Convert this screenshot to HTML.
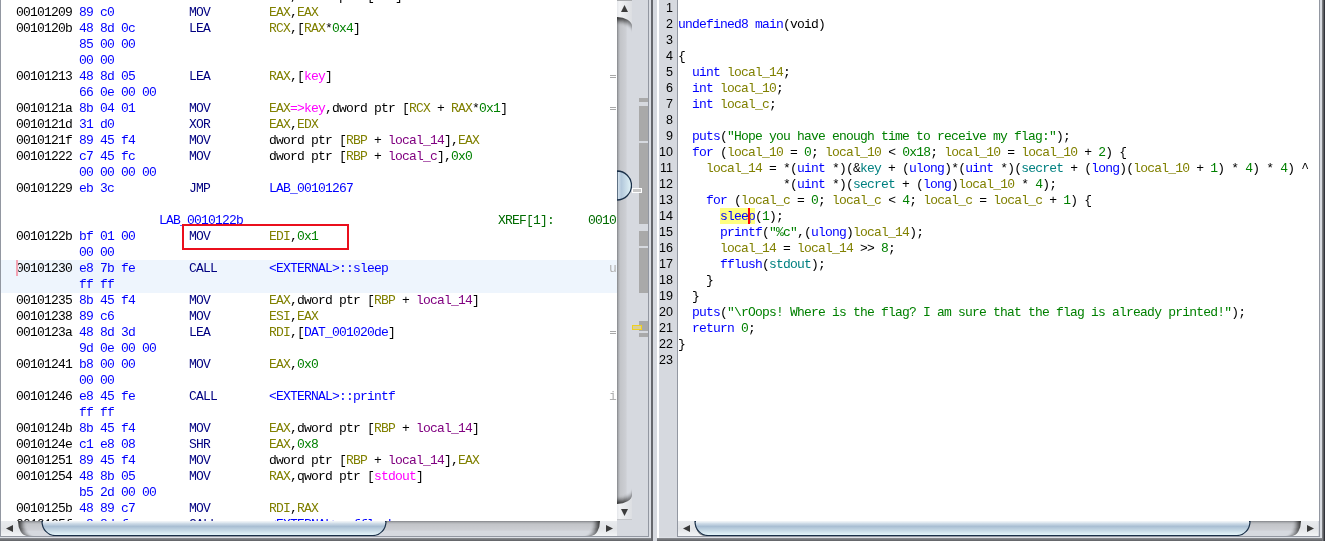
<!DOCTYPE html>
<html><head><meta charset="utf-8">
<style>
html,body{margin:0;padding:0;width:1325px;height:541px;overflow:hidden;background:#d6d9df;position:relative}
.p{position:absolute}
.t{position:absolute;white-space:pre;will-change:transform;font-family:"Liberation Mono",monospace;font-size:13px;letter-spacing:-0.8px;line-height:16px;color:#000}
.b{color:#0000ff}.m{color:#000080}.r{color:#808000}.n{color:#008000}.g{color:#ff00ff}.l{color:#800080}.k{color:#0000ff}.x{color:#006b00}.q{color:#b0b0b0}
.kw{color:#0000ff}.fn{color:#0000ff}.vr{color:#808000}.gl{color:#008080}.cn{color:#008000}.st{color:#008000}
.fnh{color:#0000ff}
.ln{position:absolute;will-change:transform;left:656px;width:17px;text-align:right;font-family:"Liberation Sans",sans-serif;font-size:12.5px;line-height:16px;color:#000}
</style></head><body>
<!-- LEFT FRAME -->
<div class="p" style="left:0;top:0;width:1px;height:537px;background:#9297a1"></div>
<div class="p" style="left:1px;top:0;width:616px;height:521px;background:#fff;overflow:hidden">
  <div class="p" style="left:0;top:260px;width:616px;height:33px;background:#eef5fd"></div>
</div>
<div class="p" style="left:1px;top:0;width:616px;height:521px;overflow:hidden">
  <div style="position:absolute;left:-1px;top:0;width:617px;height:521px">
<div class="t" style="left:188.5px;top:-11px"><span class="m">MOV</span></div>
<div class="t" style="left:268.5px;top:-11px"><span class="r">EAX</span>,dword ptr [<span class="r">RAX</span>]</div>
<div class="t" style="left:15.5px;top:5px">00101209</div>
<div class="t" style="left:78.5px;top:5px"><span class="b">89 c0</span></div>
<div class="t" style="left:188.5px;top:5px"><span class="m">MOV</span></div>
<div class="t" style="left:268.5px;top:5px"><span class="r">EAX</span>,<span class="r">EAX</span></div>
<div class="t" style="left:15.5px;top:21px">0010120b</div>
<div class="t" style="left:78.5px;top:21px"><span class="b">48 8d 0c</span></div>
<div class="t" style="left:188.5px;top:21px"><span class="m">LEA</span></div>
<div class="t" style="left:268.5px;top:21px"><span class="r">RCX</span>,[<span class="r">RAX</span>*<span class="n">0x4</span>]</div>
<div class="t" style="left:78.5px;top:37px"><span class="b">85 00 00</span></div>
<div class="t" style="left:78.5px;top:53px"><span class="b">00 00</span></div>
<div class="t" style="left:15.5px;top:69px">00101213</div>
<div class="t" style="left:78.5px;top:69px"><span class="b">48 8d 05</span></div>
<div class="t" style="left:188.5px;top:69px"><span class="m">LEA</span></div>
<div class="t" style="left:268.5px;top:69px"><span class="r">RAX</span>,[<span class="g">key</span>]</div>
<div class="t" style="left:78.5px;top:85px"><span class="b">66 0e 00 00</span></div>
<div class="t" style="left:15.5px;top:101px">0010121a</div>
<div class="t" style="left:78.5px;top:101px"><span class="b">8b 04 01</span></div>
<div class="t" style="left:188.5px;top:101px"><span class="m">MOV</span></div>
<div class="t" style="left:268.5px;top:101px"><span class="r">EAX</span><span class="g">=&gt;key</span>,dword ptr [<span class="r">RCX</span> + <span class="r">RAX</span>*<span class="n">0x1</span>]</div>
<div class="t" style="left:15.5px;top:117px">0010121d</div>
<div class="t" style="left:78.5px;top:117px"><span class="b">31 d0</span></div>
<div class="t" style="left:188.5px;top:117px"><span class="m">XOR</span></div>
<div class="t" style="left:268.5px;top:117px"><span class="r">EAX</span>,<span class="r">EDX</span></div>
<div class="t" style="left:15.5px;top:133px">0010121f</div>
<div class="t" style="left:78.5px;top:133px"><span class="b">89 45 f4</span></div>
<div class="t" style="left:188.5px;top:133px"><span class="m">MOV</span></div>
<div class="t" style="left:268.5px;top:133px">dword ptr [<span class="r">RBP</span> + <span class="l">local_14</span>],<span class="r">EAX</span></div>
<div class="t" style="left:15.5px;top:149px">00101222</div>
<div class="t" style="left:78.5px;top:149px"><span class="b">c7 45 fc</span></div>
<div class="t" style="left:188.5px;top:149px"><span class="m">MOV</span></div>
<div class="t" style="left:268.5px;top:149px">dword ptr [<span class="r">RBP</span> + <span class="l">local_c</span>],<span class="n">0x0</span></div>
<div class="t" style="left:78.5px;top:165px"><span class="b">00 00 00 00</span></div>
<div class="t" style="left:15.5px;top:181px">00101229</div>
<div class="t" style="left:78.5px;top:181px"><span class="b">eb 3c</span></div>
<div class="t" style="left:188.5px;top:181px"><span class="m">JMP</span></div>
<div class="t" style="left:268.5px;top:181px"><span class="k">LAB_00101267</span></div>
<div class="t" style="left:158.5px;top:213px"><span class="k">LAB_0010122b</span></div>
<div class="t" style="left:497.5px;top:213px"><span class="x">XREF[1]:</span></div>
<div class="t" style="left:587.5px;top:213px"><span class="x">00101267(j)</span></div>
<div class="t" style="left:15.5px;top:229px">0010122b</div>
<div class="t" style="left:78.5px;top:229px"><span class="b">bf 01 00</span></div>
<div class="t" style="left:188.5px;top:229px"><span class="m">MOV</span></div>
<div class="t" style="left:268.5px;top:229px"><span class="r">EDI</span>,<span class="n">0x1</span></div>
<div class="t" style="left:78.5px;top:245px"><span class="b">00 00</span></div>
<div class="t" style="left:15.5px;top:261px">00101230</div>
<div class="t" style="left:78.5px;top:261px"><span class="b">e8 7b fe</span></div>
<div class="t" style="left:188.5px;top:261px"><span class="m">CALL</span></div>
<div class="t" style="left:268.5px;top:261px"><span class="k">&lt;EXTERNAL&gt;::sleep</span></div>
<div class="t" style="left:78.5px;top:277px"><span class="b">ff ff</span></div>
<div class="t" style="left:15.5px;top:293px">00101235</div>
<div class="t" style="left:78.5px;top:293px"><span class="b">8b 45 f4</span></div>
<div class="t" style="left:188.5px;top:293px"><span class="m">MOV</span></div>
<div class="t" style="left:268.5px;top:293px"><span class="r">EAX</span>,dword ptr [<span class="r">RBP</span> + <span class="l">local_14</span>]</div>
<div class="t" style="left:15.5px;top:309px">00101238</div>
<div class="t" style="left:78.5px;top:309px"><span class="b">89 c6</span></div>
<div class="t" style="left:188.5px;top:309px"><span class="m">MOV</span></div>
<div class="t" style="left:268.5px;top:309px"><span class="r">ESI</span>,<span class="r">EAX</span></div>
<div class="t" style="left:15.5px;top:325px">0010123a</div>
<div class="t" style="left:78.5px;top:325px"><span class="b">48 8d 3d</span></div>
<div class="t" style="left:188.5px;top:325px"><span class="m">LEA</span></div>
<div class="t" style="left:268.5px;top:325px"><span class="r">RDI</span>,[<span class="k">DAT_001020de</span>]</div>
<div class="t" style="left:78.5px;top:341px"><span class="b">9d 0e 00 00</span></div>
<div class="t" style="left:15.5px;top:357px">00101241</div>
<div class="t" style="left:78.5px;top:357px"><span class="b">b8 00 00</span></div>
<div class="t" style="left:188.5px;top:357px"><span class="m">MOV</span></div>
<div class="t" style="left:268.5px;top:357px"><span class="r">EAX</span>,<span class="n">0x0</span></div>
<div class="t" style="left:78.5px;top:373px"><span class="b">00 00</span></div>
<div class="t" style="left:15.5px;top:389px">00101246</div>
<div class="t" style="left:78.5px;top:389px"><span class="b">e8 45 fe</span></div>
<div class="t" style="left:188.5px;top:389px"><span class="m">CALL</span></div>
<div class="t" style="left:268.5px;top:389px"><span class="k">&lt;EXTERNAL&gt;::printf</span></div>
<div class="t" style="left:78.5px;top:405px"><span class="b">ff ff</span></div>
<div class="t" style="left:15.5px;top:421px">0010124b</div>
<div class="t" style="left:78.5px;top:421px"><span class="b">8b 45 f4</span></div>
<div class="t" style="left:188.5px;top:421px"><span class="m">MOV</span></div>
<div class="t" style="left:268.5px;top:421px"><span class="r">EAX</span>,dword ptr [<span class="r">RBP</span> + <span class="l">local_14</span>]</div>
<div class="t" style="left:15.5px;top:437px">0010124e</div>
<div class="t" style="left:78.5px;top:437px"><span class="b">c1 e8 08</span></div>
<div class="t" style="left:188.5px;top:437px"><span class="m">SHR</span></div>
<div class="t" style="left:268.5px;top:437px"><span class="r">EAX</span>,<span class="n">0x8</span></div>
<div class="t" style="left:15.5px;top:453px">00101251</div>
<div class="t" style="left:78.5px;top:453px"><span class="b">89 45 f4</span></div>
<div class="t" style="left:188.5px;top:453px"><span class="m">MOV</span></div>
<div class="t" style="left:268.5px;top:453px">dword ptr [<span class="r">RBP</span> + <span class="l">local_14</span>],<span class="r">EAX</span></div>
<div class="t" style="left:15.5px;top:469px">00101254</div>
<div class="t" style="left:78.5px;top:469px"><span class="b">48 8b 05</span></div>
<div class="t" style="left:188.5px;top:469px"><span class="m">MOV</span></div>
<div class="t" style="left:268.5px;top:469px"><span class="r">RAX</span>,qword ptr [<span class="g">stdout</span>]</div>
<div class="t" style="left:78.5px;top:485px"><span class="b">b5 2d 00 00</span></div>
<div class="t" style="left:15.5px;top:501px">0010125b</div>
<div class="t" style="left:78.5px;top:501px"><span class="b">48 89 c7</span></div>
<div class="t" style="left:188.5px;top:501px"><span class="m">MOV</span></div>
<div class="t" style="left:268.5px;top:501px"><span class="r">RDI</span>,<span class="r">RAX</span></div>
<div class="t" style="left:15.5px;top:517px">0010125f</div>
<div class="t" style="left:78.5px;top:517px"><span class="b">e8 8d fe</span></div>
<div class="t" style="left:188.5px;top:517px"><span class="m">CALL</span></div>
<div class="t" style="left:268.5px;top:517px"><span class="k">&lt;EXTERNAL&gt;::fflush</span></div>
<div style="position:absolute;left:610px;top:75px;width:6px;height:1px;background:#a8a8a8"></div>
<div style="position:absolute;left:610px;top:77px;width:6px;height:1px;background:#a8a8a8"></div>
<div style="position:absolute;left:610px;top:107px;width:6px;height:1px;background:#a8a8a8"></div>
<div style="position:absolute;left:610px;top:109px;width:6px;height:1px;background:#a8a8a8"></div>
<div style="position:absolute;left:610px;top:331px;width:6px;height:1px;background:#a8a8a8"></div>
<div style="position:absolute;left:610px;top:333px;width:6px;height:1px;background:#a8a8a8"></div>
<div class="t q" style="left:608.5px;top:261px">u</div>
<div class="t q" style="left:608.5px;top:389px">i</div>
  <div class="p" style="left:16px;top:260px;width:2px;height:16px;background:#f3a3b3"></div>
  <div class="p" style="left:182px;top:224px;width:163px;height:22px;border:2px solid #ea0f1c"></div>
  </div>
</div>
<!-- vertical scrollbar left -->
<svg class="p" style="left:617px;top:0" width="15" height="520" viewBox="0 0 15 520">
  <defs>
    <linearGradient id="vtrack" x1="0" y1="0" x2="1" y2="0">
      <stop offset="0" stop-color="#7e8084"/><stop offset="0.07" stop-color="#a3a5a9"/><stop offset="0.2" stop-color="#c2c4c8"/><stop offset="0.6" stop-color="#cdcfd4"/><stop offset="0.68" stop-color="#d6d9df"/><stop offset="1" stop-color="#d6d9df"/>
    </linearGradient>
    <linearGradient id="vbtn" x1="0" y1="0" x2="1" y2="0">
      <stop offset="0" stop-color="#e4e6ea"/><stop offset="0.15" stop-color="#f2f3f5"/><stop offset="0.6" stop-color="#e6e8eb"/><stop offset="1" stop-color="#dcdee2"/>
    </linearGradient>
    <linearGradient id="vshT" x1="0" y1="0" x2="0" y2="1">
      <stop offset="0" stop-color="#303030" stop-opacity="0.9"/><stop offset="1" stop-color="#303030" stop-opacity="0"/>
    </linearGradient>
    <linearGradient id="vshB" x1="0" y1="1" x2="0" y2="0">
      <stop offset="0" stop-color="#303030" stop-opacity="0.9"/><stop offset="1" stop-color="#303030" stop-opacity="0"/>
    </linearGradient>
    <linearGradient id="vthumb" x1="0" y1="0" x2="1" y2="0">
      <stop offset="0" stop-color="#eef4f8"/><stop offset="0.12" stop-color="#c9d9e6"/><stop offset="0.3" stop-color="#b3c8db"/><stop offset="1" stop-color="#e2f4f8"/>
    </linearGradient>
    <linearGradient id="vmg" x1="0" y1="0" x2="1" y2="0"><stop offset="0" stop-color="#fff"/><stop offset="0.5" stop-color="#fff" stop-opacity="0.85"/><stop offset="1" stop-color="#fff" stop-opacity="0.5"/></linearGradient>
    <mask id="vmask" maskUnits="userSpaceOnUse" x="0" y="0" width="15" height="520"><rect x="0" y="0" width="15" height="520" fill="url(#vmg)"/></mask>
  </defs>
  <rect x="0" y="0" width="15" height="520" fill="url(#vtrack)"/>
  <g mask="url(#vmask)">
  <path d="M0,0 H15 V27 A15,9 0 0 0 0,18 Z" fill="#202020" fill-opacity="0.35"/>
  <path d="M0,520 H15 V494 A15,9 0 0 1 0,503 Z" fill="#202020" fill-opacity="0.35"/>
  <path d="M0,0 H15 V28 A15,9 0 0 0 0,19 Z" fill="#202020" fill-opacity="0.3"/>
  <path d="M0,520 H15 V493 A15,9 0 0 1 0,502 Z" fill="#202020" fill-opacity="0.3"/>
  <path d="M0,0 H15 V29 A15,9 0 0 0 0,20 Z" fill="#202020" fill-opacity="0.25"/>
  <path d="M0,520 H15 V492 A15,9 0 0 1 0,501 Z" fill="#202020" fill-opacity="0.25"/>
  <path d="M0,0 H15 V30 A15,9 0 0 0 0,21 Z" fill="#202020" fill-opacity="0.2"/>
  <path d="M0,520 H15 V491 A15,9 0 0 1 0,500 Z" fill="#202020" fill-opacity="0.2"/>
  <path d="M0,0 H15 V31 A15,9 0 0 0 0,22 Z" fill="#202020" fill-opacity="0.15"/>
  <path d="M0,520 H15 V490 A15,9 0 0 1 0,499 Z" fill="#202020" fill-opacity="0.15"/>
  <path d="M0,0 H15 V32 A15,9 0 0 0 0,23 Z" fill="#202020" fill-opacity="0.1"/>
  <path d="M0,520 H15 V489 A15,9 0 0 1 0,498 Z" fill="#202020" fill-opacity="0.1"/>
  <path d="M0,0 H15 V33 A15,9 0 0 0 0,24 Z" fill="#202020" fill-opacity="0.06"/>
  <path d="M0,520 H15 V488 A15,9 0 0 1 0,497 Z" fill="#202020" fill-opacity="0.06"/>
  <path d="M0,0 H15 V34 A15,9 0 0 0 0,25 Z" fill="#202020" fill-opacity="0.03"/>
  <path d="M0,520 H15 V487 A15,9 0 0 1 0,496 Z" fill="#202020" fill-opacity="0.03"/>
  </g>
  <path d="M0,0 H15 V26 A15,9 0 0 0 0,17 Z" fill="url(#vbtn)"/>
  <rect x="0" y="0" width="15" height="1" fill="#a9abae"/>
  <path d="M4,12 L7.5,5 L11,12 Z" fill="#3c3c3c"/>
  <path d="M0,520 H15 V495 A15,9 0 0 1 0,504 Z" fill="url(#vbtn)"/>
  <rect x="0" y="519" width="15" height="1" fill="#c4c6ca"/>
  <path d="M4,509 L11,509 L7.5,516 Z" fill="#3c3c3c"/>
  <path d="M0,171 A14.5,14.5 0 0 1 0,200 Z" fill="url(#vthumb)" stroke="#1a3049" stroke-width="1.3"/>
</svg>
<!-- overview column -->
<div class="p" style="left:639px;top:98px;width:9px;height:4px;background:#a9a9a9"></div>
<div class="p" style="left:639px;top:106px;width:9px;height:35px;background:#a9a9a9"></div>
<div class="p" style="left:639px;top:143px;width:9px;height:81px;background:#a9a9a9"></div>
<div class="p" style="left:639px;top:231px;width:9px;height:15px;background:#a9a9a9"></div>
<div class="p" style="left:639px;top:248px;width:9px;height:45px;background:#a9a9a9"></div>
<div class="p" style="left:639px;top:321px;width:9px;height:10px;background:#a9a9a9"></div>
<div class="p" style="left:639px;top:333px;width:9px;height:4px;background:#a9a9a9"></div>
<div class="p" style="left:632px;top:188px;width:8px;height:3px;border:1px solid #ffffff;background:#c8c8c8"></div>
<div class="p" style="left:632px;top:325px;width:8px;height:3px;border:1px solid #f0d020;background:#d8cf9c"></div>
<div class="p" style="left:648px;top:0;width:1px;height:537px;background:#9297a1"></div>
<div class="p" style="left:649px;top:0;width:2px;height:538px;background:#d9dce2"></div>
<div class="p" style="left:651px;top:0;width:2px;height:541px;background:#66686d"></div>
<!-- h scrollbar left -->
<svg class="p" style="left:1px;top:521px" width="616" height="15" viewBox="0 0 616 15">
  <defs>
    <linearGradient id="hltr" x1="0" y1="0" x2="0" y2="1">
      <stop offset="0" stop-color="#7e8084"/><stop offset="0.07" stop-color="#a3a5a9"/><stop offset="0.2" stop-color="#c2c4c8"/><stop offset="0.6" stop-color="#cdcfd4"/><stop offset="0.68" stop-color="#d6d9df"/><stop offset="1" stop-color="#d6d9df"/>
    </linearGradient>
    <linearGradient id="hlbt" x1="0" y1="0" x2="0" y2="1">
      <stop offset="0" stop-color="#e9ebee"/><stop offset="0.5" stop-color="#e2e4e7"/><stop offset="1" stop-color="#f2f4f6"/>
    </linearGradient>
    <linearGradient id="hlshL" x1="0" y1="0" x2="1" y2="0">
      <stop offset="0" stop-color="#303030" stop-opacity="0.9"/><stop offset="1" stop-color="#303030" stop-opacity="0"/>
    </linearGradient>
    <linearGradient id="hlshR" x1="1" y1="0" x2="0" y2="0">
      <stop offset="0" stop-color="#303030" stop-opacity="0.9"/><stop offset="1" stop-color="#303030" stop-opacity="0"/>
    </linearGradient>
    <linearGradient id="hlth" x1="0" y1="0" x2="0" y2="1">
      <stop offset="0" stop-color="#f4f7fa"/><stop offset="0.12" stop-color="#d3dfea"/><stop offset="0.35" stop-color="#a9bed3"/><stop offset="1" stop-color="#e9f9fc"/>
    </linearGradient>
    <linearGradient id="hlmg" x1="0" y1="0" x2="0" y2="1"><stop offset="0" stop-color="#fff"/><stop offset="0.5" stop-color="#fff" stop-opacity="0.85"/><stop offset="1" stop-color="#fff" stop-opacity="0.5"/></linearGradient>
    <mask id="hlmk" maskUnits="userSpaceOnUse" x="0" y="0" width="616" height="15"><rect x="0" y="0" width="616" height="15" fill="url(#hlmg)"/></mask>
  </defs>
  <rect x="0" y="0" width="616" height="15" fill="url(#hltr)"/>
  <g mask="url(#hlmk)">
  <path d="M0,0 H18 A9,15 0 0 0 27,15 H0 Z" fill="#202020" fill-opacity="0.35"/>
  <path d="M616,0 H598 A9,15 0 0 1 589,15 H616 Z" fill="#202020" fill-opacity="0.35"/>
  <path d="M0,0 H19 A9,15 0 0 0 28,15 H0 Z" fill="#202020" fill-opacity="0.3"/>
  <path d="M616,0 H597 A9,15 0 0 1 588,15 H616 Z" fill="#202020" fill-opacity="0.3"/>
  <path d="M0,0 H20 A9,15 0 0 0 29,15 H0 Z" fill="#202020" fill-opacity="0.25"/>
  <path d="M616,0 H596 A9,15 0 0 1 587,15 H616 Z" fill="#202020" fill-opacity="0.25"/>
  <path d="M0,0 H21 A9,15 0 0 0 30,15 H0 Z" fill="#202020" fill-opacity="0.2"/>
  <path d="M616,0 H595 A9,15 0 0 1 586,15 H616 Z" fill="#202020" fill-opacity="0.2"/>
  <path d="M0,0 H22 A9,15 0 0 0 31,15 H0 Z" fill="#202020" fill-opacity="0.15"/>
  <path d="M616,0 H594 A9,15 0 0 1 585,15 H616 Z" fill="#202020" fill-opacity="0.15"/>
  <path d="M0,0 H23 A9,15 0 0 0 32,15 H0 Z" fill="#202020" fill-opacity="0.1"/>
  <path d="M616,0 H593 A9,15 0 0 1 584,15 H616 Z" fill="#202020" fill-opacity="0.1"/>
  <path d="M0,0 H24 A9,15 0 0 0 33,15 H0 Z" fill="#202020" fill-opacity="0.06"/>
  <path d="M616,0 H592 A9,15 0 0 1 583,15 H616 Z" fill="#202020" fill-opacity="0.06"/>
  <path d="M0,0 H25 A9,15 0 0 0 34,15 H0 Z" fill="#202020" fill-opacity="0.03"/>
  <path d="M616,0 H591 A9,15 0 0 1 582,15 H616 Z" fill="#202020" fill-opacity="0.03"/>
  </g>
  <path d="M0,0 H17 A9,15 0 0 0 26,15 H0 Z" fill="url(#hlbt)"/>
  <path d="M5,7.5 L12,4 L12,11 Z" fill="#3a3a3a"/>
  <path d="M616,0 H599 A9,15 0 0 1 590,15 H616 Z" fill="url(#hlbt)"/>
  <path d="M612,7.5 L605,4 L605,11 Z" fill="#3a3a3a"/>
  <path d="M41,0.5 H385 A13,14 0 0 1 372,14.5 H54 A13,14 0 0 1 41,0.5 Z" fill="url(#hlth)" stroke="#1a3049" stroke-width="1.2"/>
  <rect x="42" y="0" width="342" height="1" fill="#eef2f6"/>
</svg>
<div class="p" style="left:0;top:536px;width:649px;height:1px;background:#9297a1"></div>
<div class="p" style="left:0;top:537px;width:651px;height:1px;background:#dde0e6"></div>
<div class="p" style="left:0;top:538px;width:651px;height:3px;background:linear-gradient(#8c8e92,#5e6064)"></div>
<!-- RIGHT FRAME -->
<div class="p" style="left:657px;top:0;width:2px;height:539px;background:#ffffff"></div>
<div class="p" style="left:677px;top:0;width:1px;height:537px;background:#9297a1"></div>
<div class="p" style="left:678px;top:0;width:641px;height:521px;background:#fff"></div>
<div class="p" style="left:720px;top:208px;width:35px;height:16px;background:#ffff80"></div>
<div class="ln" style="top:0px">1</div>
<div class="ln" style="top:16px">2</div>
<div class="t" style="left:677.5px;top:17px"><span class="kw">undefined8</span> <span class="fn">main</span>(void)</div>
<div class="ln" style="top:32px">3</div>
<div class="ln" style="top:48px">4</div>
<div class="t" style="left:677.5px;top:49px">{</div>
<div class="ln" style="top:64px">5</div>
<div class="t" style="left:677.5px;top:65px">  <span class="kw">uint</span> <span class="vr">local_14</span>;</div>
<div class="ln" style="top:80px">6</div>
<div class="t" style="left:677.5px;top:81px">  <span class="kw">int</span> <span class="vr">local_10</span>;</div>
<div class="ln" style="top:96px">7</div>
<div class="t" style="left:677.5px;top:97px">  <span class="kw">int</span> <span class="vr">local_c</span>;</div>
<div class="ln" style="top:112px">8</div>
<div class="ln" style="top:128px">9</div>
<div class="t" style="left:677.5px;top:129px">  <span class="fn">puts</span>(<span class="st">&quot;Hope you have enough time to receive my flag:&quot;</span>);</div>
<div class="ln" style="top:144px">10</div>
<div class="t" style="left:677.5px;top:145px">  <span class="kw">for</span> (<span class="vr">local_10</span> = <span class="cn">0</span>; <span class="vr">local_10</span> &lt; <span class="cn">0x18</span>; <span class="vr">local_10</span> = <span class="vr">local_10</span> + <span class="cn">2</span>) {</div>
<div class="ln" style="top:160px">11</div>
<div class="t" style="left:677.5px;top:161px">    <span class="vr">local_14</span> = *(<span class="kw">uint</span> *)(&amp;<span class="gl">key</span> + (<span class="kw">ulong</span>)*(<span class="kw">uint</span> *)(<span class="gl">secret</span> + (<span class="kw">long</span>)(<span class="vr">local_10</span> + <span class="cn">1</span>) * <span class="cn">4</span>) * <span class="cn">4</span>) ^</div>
<div class="ln" style="top:176px">12</div>
<div class="t" style="left:677.5px;top:177px">               *(<span class="kw">uint</span> *)(<span class="gl">secret</span> + (<span class="kw">long</span>)<span class="vr">local_10</span> * <span class="cn">4</span>);</div>
<div class="ln" style="top:192px">13</div>
<div class="t" style="left:677.5px;top:193px">    <span class="kw">for</span> (<span class="vr">local_c</span> = <span class="cn">0</span>; <span class="vr">local_c</span> &lt; <span class="cn">4</span>; <span class="vr">local_c</span> = <span class="vr">local_c</span> + <span class="cn">1</span>) {</div>
<div class="ln" style="top:208px">14</div>
<div class="t" style="left:677.5px;top:209px">      <span class="fnh">sleep</span>(<span class="cn">1</span>);</div>
<div class="ln" style="top:224px">15</div>
<div class="t" style="left:677.5px;top:225px">      <span class="fn">printf</span>(<span class="st">&quot;%c&quot;</span>,(<span class="kw">ulong</span>)<span class="vr">local_14</span>);</div>
<div class="ln" style="top:240px">16</div>
<div class="t" style="left:677.5px;top:241px">      <span class="vr">local_14</span> = <span class="vr">local_14</span> &gt;&gt; <span class="cn">8</span>;</div>
<div class="ln" style="top:256px">17</div>
<div class="t" style="left:677.5px;top:257px">      <span class="fn">fflush</span>(<span class="gl">stdout</span>);</div>
<div class="ln" style="top:272px">18</div>
<div class="t" style="left:677.5px;top:273px">    }</div>
<div class="ln" style="top:288px">19</div>
<div class="t" style="left:677.5px;top:289px">  }</div>
<div class="ln" style="top:304px">20</div>
<div class="t" style="left:677.5px;top:305px">  <span class="fn">puts</span>(<span class="st">&quot;\rOops! Where is the flag? I am sure that the flag is already printed!&quot;</span>);</div>
<div class="ln" style="top:320px">21</div>
<div class="t" style="left:677.5px;top:321px">  <span class="kw">return</span> <span class="cn">0</span>;</div>
<div class="ln" style="top:336px">22</div>
<div class="t" style="left:677.5px;top:337px">}</div>
<div class="ln" style="top:352px">23</div>
<div class="p" style="left:748px;top:208px;width:2px;height:16px;background:#ff0000"></div>
<svg class="p" style="left:678px;top:521px" width="640" height="15" viewBox="0 0 640 15">
  <defs>
    <linearGradient id="hrtr" x1="0" y1="0" x2="0" y2="1">
      <stop offset="0" stop-color="#7e8084"/><stop offset="0.07" stop-color="#a3a5a9"/><stop offset="0.2" stop-color="#c2c4c8"/><stop offset="0.6" stop-color="#cdcfd4"/><stop offset="0.68" stop-color="#d6d9df"/><stop offset="1" stop-color="#d6d9df"/>
    </linearGradient>
    <linearGradient id="hrbt" x1="0" y1="0" x2="0" y2="1">
      <stop offset="0" stop-color="#e9ebee"/><stop offset="0.5" stop-color="#e2e4e7"/><stop offset="1" stop-color="#f2f4f6"/>
    </linearGradient>
    <linearGradient id="hrshL" x1="0" y1="0" x2="1" y2="0">
      <stop offset="0" stop-color="#303030" stop-opacity="0.9"/><stop offset="1" stop-color="#303030" stop-opacity="0"/>
    </linearGradient>
    <linearGradient id="hrshR" x1="1" y1="0" x2="0" y2="0">
      <stop offset="0" stop-color="#303030" stop-opacity="0.9"/><stop offset="1" stop-color="#303030" stop-opacity="0"/>
    </linearGradient>
    <linearGradient id="hrth" x1="0" y1="0" x2="0" y2="1">
      <stop offset="0" stop-color="#f4f7fa"/><stop offset="0.12" stop-color="#d3dfea"/><stop offset="0.35" stop-color="#a9bed3"/><stop offset="1" stop-color="#e9f9fc"/>
    </linearGradient>
    <linearGradient id="hrmg" x1="0" y1="0" x2="0" y2="1"><stop offset="0" stop-color="#fff"/><stop offset="0.5" stop-color="#fff" stop-opacity="0.85"/><stop offset="1" stop-color="#fff" stop-opacity="0.5"/></linearGradient>
    <mask id="hrmk" maskUnits="userSpaceOnUse" x="0" y="0" width="640" height="15"><rect x="0" y="0" width="640" height="15" fill="url(#hrmg)"/></mask>
  </defs>
  <rect x="0" y="0" width="640" height="15" fill="url(#hrtr)"/>
  <g mask="url(#hrmk)">
  <path d="M0,0 H18 A9,15 0 0 0 27,15 H0 Z" fill="#202020" fill-opacity="0.35"/>
  <path d="M640,0 H622 A9,15 0 0 1 613,15 H640 Z" fill="#202020" fill-opacity="0.35"/>
  <path d="M0,0 H19 A9,15 0 0 0 28,15 H0 Z" fill="#202020" fill-opacity="0.3"/>
  <path d="M640,0 H621 A9,15 0 0 1 612,15 H640 Z" fill="#202020" fill-opacity="0.3"/>
  <path d="M0,0 H20 A9,15 0 0 0 29,15 H0 Z" fill="#202020" fill-opacity="0.25"/>
  <path d="M640,0 H620 A9,15 0 0 1 611,15 H640 Z" fill="#202020" fill-opacity="0.25"/>
  <path d="M0,0 H21 A9,15 0 0 0 30,15 H0 Z" fill="#202020" fill-opacity="0.2"/>
  <path d="M640,0 H619 A9,15 0 0 1 610,15 H640 Z" fill="#202020" fill-opacity="0.2"/>
  <path d="M0,0 H22 A9,15 0 0 0 31,15 H0 Z" fill="#202020" fill-opacity="0.15"/>
  <path d="M640,0 H618 A9,15 0 0 1 609,15 H640 Z" fill="#202020" fill-opacity="0.15"/>
  <path d="M0,0 H23 A9,15 0 0 0 32,15 H0 Z" fill="#202020" fill-opacity="0.1"/>
  <path d="M640,0 H617 A9,15 0 0 1 608,15 H640 Z" fill="#202020" fill-opacity="0.1"/>
  <path d="M0,0 H24 A9,15 0 0 0 33,15 H0 Z" fill="#202020" fill-opacity="0.06"/>
  <path d="M640,0 H616 A9,15 0 0 1 607,15 H640 Z" fill="#202020" fill-opacity="0.06"/>
  <path d="M0,0 H25 A9,15 0 0 0 34,15 H0 Z" fill="#202020" fill-opacity="0.03"/>
  <path d="M640,0 H615 A9,15 0 0 1 606,15 H640 Z" fill="#202020" fill-opacity="0.03"/>
  </g>
  <path d="M0,0 H17 A9,15 0 0 0 26,15 H0 Z" fill="url(#hrbt)"/>
  <path d="M5,7.5 L12,4 L12,11 Z" fill="#3a3a3a"/>
  <path d="M640,0 H623 A9,15 0 0 1 614,15 H640 Z" fill="url(#hrbt)"/>
  <path d="M636,7.5 L629,4 L629,11 Z" fill="#3a3a3a"/>
  <path d="M17,0.5 H572 A13,14 0 0 1 559,14.5 H30 A13,14 0 0 1 17,0.5 Z" fill="url(#hrth)" stroke="#1a3049" stroke-width="1.2"/>
  <rect x="18" y="0" width="553" height="1" fill="#eef2f6"/>
</svg>
<div class="p" style="left:1319px;top:0;width:1px;height:537px;background:#9297a1"></div>
<div class="p" style="left:1320px;top:0;width:2px;height:538px;background:#d9dce2"></div>
<div class="p" style="left:1322px;top:0;width:3px;height:541px;background:linear-gradient(to right,#8a8c90,#5a5c60 50%,#1e2028)"></div>
<div class="p" style="left:677px;top:536px;width:643px;height:1px;background:#9297a1"></div>
<div class="p" style="left:659px;top:537px;width:663px;height:1px;background:#dde0e6"></div>
<div class="p" style="left:657px;top:538px;width:665px;height:3px;background:linear-gradient(#8c8e92,#5e6064)"></div>
</body></html>
